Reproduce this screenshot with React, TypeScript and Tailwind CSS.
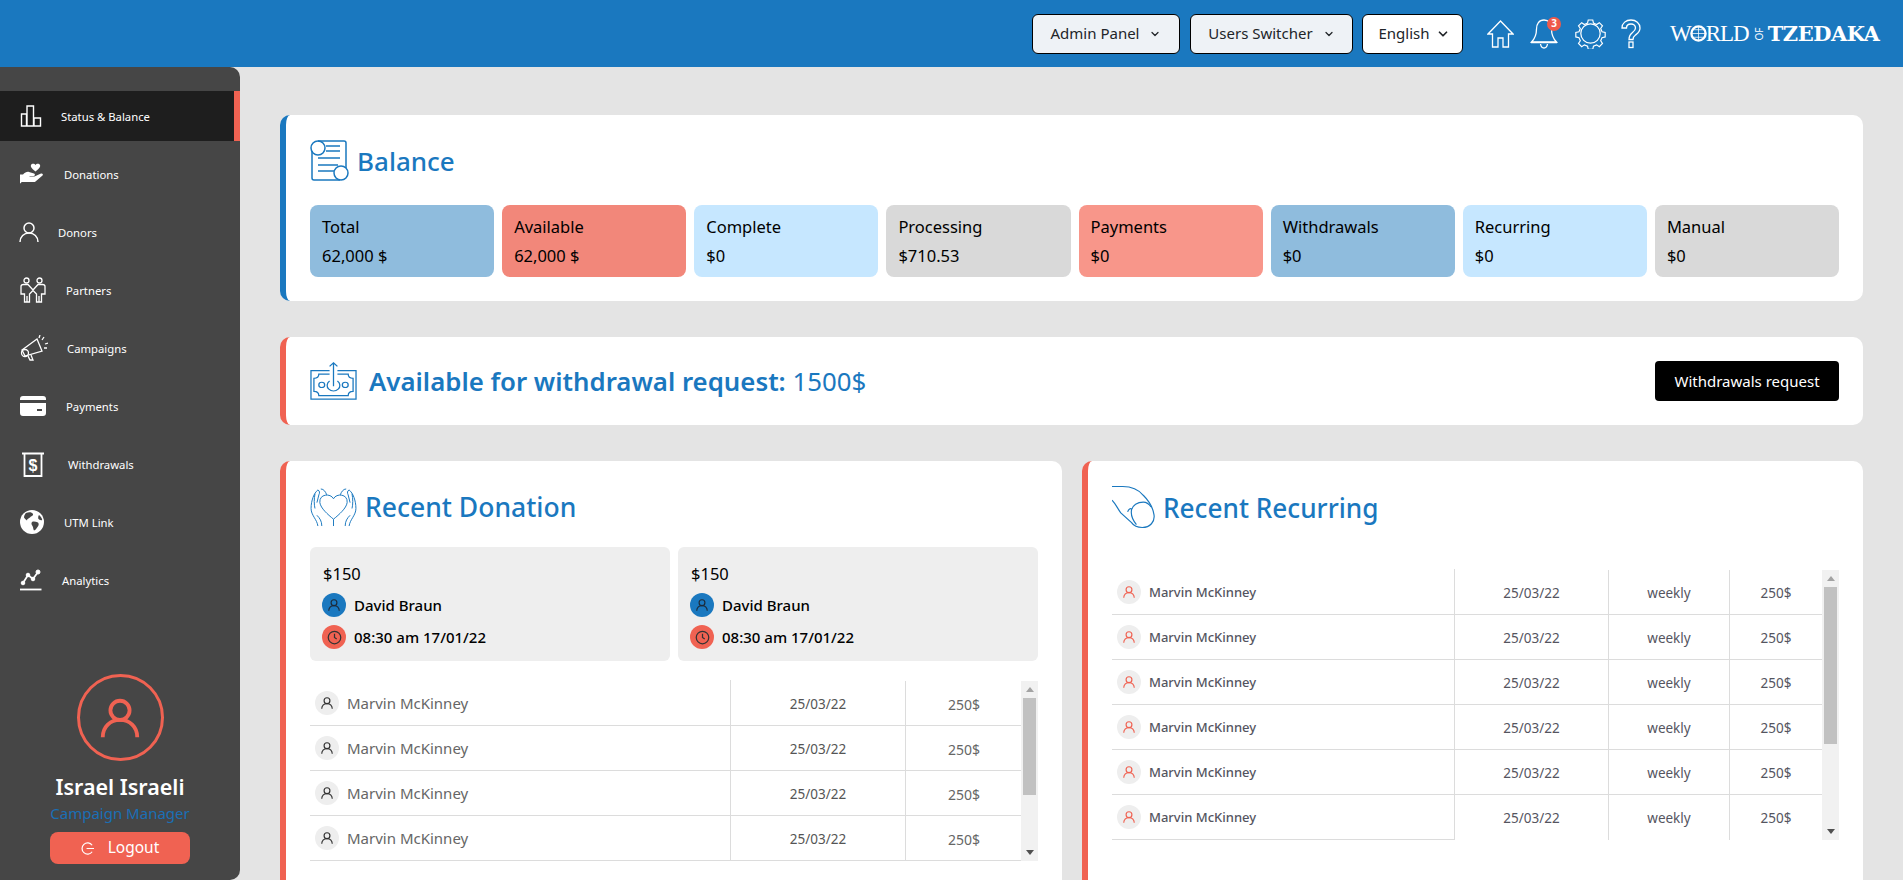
import { ChevronDown } from "lucide-react"

const font = { fontFamily: '"Noto Sans", sans-serif' }

const tiles = [
  { label: "Total", value: "62,000 $", color: "bg-[#8fbcdd]" },
  { label: "Available", value: "62,000 $", color: "bg-[#f2877a]" },
  { label: "Complete", value: "$0", color: "bg-[#c6e7ff]" },
  { label: "Processing", value: "$710.53", color: "bg-[#d9d9d9]" },
  { label: "Payments", value: "$0", color: "bg-[#f8968a]" },
  { label: "Withdrawals", value: "$0", color: "bg-[#8fbcdd]" },
  { label: "Recurring", value: "$0", color: "bg-[#c6e7ff]" },
  { label: "Manual", value: "$0", color: "bg-[#d9d9d9]" },
]

function UserGlyph({ className = "", stroke = "currentColor", width = 2 }: { className?: string; stroke?: string; width?: number }) {
  return (
    <svg viewBox="0 0 24 24" fill="none" stroke={stroke} strokeWidth={width} className={className}>
      <circle cx="12" cy="8" r="5" />
      <path d="M3 22c0-5.500 4-9 9-9s9 3.500 9 9" />
    </svg>
  )
}

function ClockGlyph({ className = "" }: { className?: string }) {
  return (
    <svg viewBox="0 0 24 24" fill="none" stroke="currentColor" strokeWidth="2" className={className}>
      <circle cx="12" cy="12" r="10" />
      <path d="M12 6v6l3.500 2.500" />
    </svg>
  )
}

const navIcons: Record<string, React.ReactNode> = {
  bars: (
    <svg viewBox="0 0 22 22" fill="none" stroke="white" strokeWidth="1.400" className="w-[22px] h-[22px]">
      <path d="M1 21h20M1.500 9h5v12h-5zM7 1h6.500v20H7zM14 13h6.500v8H14z" />
    </svg>
  ),
  donations: (
    <svg viewBox="0 0 24 22" fill="white" className="w-[24px] h-[22px]">
      <path d="M15.500 8.500 C11 5 10.500 3.500 11 2 C11.500 .500 14.500 0 15.500 2 C16.500 0 19.500 .500 20 2 C20.500 3.500 20 5 15.500 8.500Z" />
      <path d="M0 11.500h3c2 -2 4 -3 6 -2.500l5 1.500c1.500.500 1 2.500 -.500 2.500h-4v.500h5l6.500 -3c1.500 -.500 2.500 1 1.500 2l-7 6c-.500 .400 -1 .500 -1.500 .500H1.500C.500 21 0 20.500 0 19.500Z" />
    </svg>
  ),
  donors: <UserGlyph stroke="white" width={1.500} className="w-[24px] h-[24px] ml-[-3px] shrink-0" />,
  partners: (
    <svg viewBox="0 0 26 26" fill="none" stroke="white" strokeWidth="1.300" className="w-[26px] h-[26px]">
      <circle cx="6.500" cy="3.500" r="2.500" />
      <circle cx="19.500" cy="3.500" r="2.500" />
      <path d="M1 17V9.500C1 8 2 7.500 3.500 7.500H8L13 13l5-5.500h4.500C24 7.500 25 8 25 9.500V17l-3.500 0V25h-5v-8L13 13.500 9.500 17v8h-5v-8z" />
      <path d="M7 25v-6M19 25v-6" />
    </svg>
  ),
  campaigns: (
    <svg viewBox="0 0 28 26" fill="none" stroke="white" strokeWidth="1.300" className="w-[28px] h-[26px] shrink-0">
      <path d="M2 15 L17 4 L22 16 L5 21 Z" />
      <circle cx="5" cy="18" r="3.500" />
      <path d="M8 21l2 4h3l-2-5M22 5l2-3M25 9l3-1M24 13h3M19 3l1-3" />
    </svg>
  ),
  payments: (
    <svg viewBox="0 0 26 20" fill="white" className="w-[26px] h-[20px]">
      <path d="M0 3a3 3 0 0 1 3-3h20a3 3 0 0 1 3 3v1H0z" />
      <path fillRule="evenodd" d="M0 7h26v10a3 3 0 0 1-3 3H3a3 3 0 0 1-3-3zM17 13v2h5v-2z" />
    </svg>
  ),
  withdrawals: (
    <svg viewBox="0 0 24 25" fill="none" stroke="white" strokeWidth="1.800" className="w-[24px] h-[25px] ml-[1px] shrink-0">
      <path d="M1 1.500h22M3.500 1.500V24h17V1.500" />
      <text x="12" y="18.500" fill="white" stroke="none" fontSize="16" fontWeight="700" textAnchor="middle" fontFamily="Liberation Sans">$</text>
    </svg>
  ),
  utm: (
    <svg viewBox="0 0 24 24" className="w-[24px] h-[24px]">
      <circle cx="12" cy="12" r="12" fill="white" />
      <path fill="#464646" d="M6 3c3-1.500 6-1 7 1 .500 2-2 2-3 3.500-1 1-3 1-3 3-1.500-1-2.500-2-3-3 0-2 1-3.500 2-4.500zM12 12c2-1 4 0 6 .500 1 1 1 3-.500 4.500-1 1.500-2 3-3.500 3.500-1 -1 -.500-3-1.500-4.500-1-1-1.500-3-.500-4zM19 5c1.500 1 3 3 3.200 5-1.500.500-3 0-4-1.500 0-1.500 0-2.500.800-3.500z" />
    </svg>
  ),
  analytics: (
    <svg viewBox="0 0 22 22" fill="none" stroke="white" className="w-[22px] h-[22px]">
      <path d="M0 20.500h21.500" strokeWidth="1.800" />
      <path d="M3 14 L8 6 L13 10 L18 3" strokeWidth="1.800" />
      <circle cx="3" cy="14" r="1.800" fill="white" />
      <circle cx="8" cy="6" r="1.800" fill="white" />
      <circle cx="13" cy="10" r="1.800" fill="white" />
      <circle cx="18" cy="3" r="2" fill="white" />
    </svg>
  ),
}

const navItems = [
  { label: "Status & Balance", icon: "bars", gap: "ml-[15px]", active: true },
  { label: "Donations", icon: "donations", gap: "ml-[18px]" },
  { label: "Donors", icon: "donors", gap: "ml-[12px]" },
  { label: "Partners", icon: "partners", gap: "ml-[20px]" },
  { label: "Campaigns", icon: "campaigns", gap: "ml-[21px]" },
  { label: "Payments", icon: "payments", gap: "ml-[20px]" },
  { label: "Withdrawals", icon: "withdrawals", gap: "ml-[22px]" },
  { label: "UTM Link", icon: "utm", gap: "ml-[18px]" },
  { label: "Analytics", icon: "analytics", gap: "ml-[16px]" },
]

function TopBar() {
  return (
    <header className="h-[67px] shrink-0 bg-[#1a78bf] flex items-center justify-end pr-[18px]">
      <button className="w-[148px] h-[40px] mr-[10px] rounded-[6px] border border-black bg-[#eef2f6] flex items-center justify-center gap-[10px] text-[15px] text-[#212529]">
        Admin Panel <ChevronDown className="w-[12px] h-[12px]" strokeWidth={2.500} />
      </button>
      <button className="w-[163px] h-[40px] mr-[9px] rounded-[6px] border border-black bg-[#eef2f6] flex items-center justify-center gap-[10px] text-[15px] text-[#212529]">
        Users Switcher <ChevronDown className="w-[12px] h-[12px]" strokeWidth={2.500} />
      </button>
      <button className="w-[101px] h-[40px] mr-[24px] rounded-[6px] border border-black bg-white flex items-center justify-center gap-[6px] pl-[3px] text-[15px] text-[#212529]">
        English <ChevronDown className="w-[14px] h-[14px]" strokeWidth={3} />
      </button>
      <svg viewBox="0 0 27 28" fill="none" stroke="white" strokeWidth="1.300" className="w-[27px] h-[28px] mr-[16px]">
        <path d="M13.500 1 L1 14h4.500v13h5.500v-9h5v9h5.500V14H26Z" />
      </svg>
      <div className="relative w-[31px] h-[32px] mr-[14px]">
        <svg viewBox="0 0 28 31" fill="none" stroke="white" strokeWidth="1.300" className="w-[28px] h-[31px]">
          <path d="M14 2c-5 0-7.500 4-7.500 9 0 7-2 10-5 13h25c-3-3-5-6-5-13 0-5-2.500-9-7.500-9z" />
          <path d="M1 24.500h26M10.500 26c.500 3 1.500 4 3.500 4s3-1 3.500-4" />
        </svg>
        <span className="absolute top-[-1px] right-[0px] w-[14px] h-[14px] rounded-full bg-[#ee5a4b] text-white text-[10px] font-bold flex items-center justify-center">3</span>
      </div>
      <svg viewBox="0 0 32 32" fill="none" stroke="white" strokeWidth="1.300" className="w-[31px] h-[31px] mr-[15px]">
        <circle cx="16" cy="16" r="10" />
        <path d="M13.500 1.500h5l.800 3.500 3.500 1.500 3-2 3.500 3.500-2 3 1.500 3.500 3.500.800v5l-3.500.800-1.500 3.500 2 3-3.500 3.500-3-2-3.500 1.500-.800 3.500h-5l-.800-3.500-3.500-1.500-3 2-3.500-3.500 2-3-1.500-3.500-3.500-.800v-5l3.500-.800 1.500-3.500-2-3 3.500-3.500 3 2 3.500-1.500z" transform="translate(16 16) scale(.93) translate(-16 -16.500)" />
      </svg>
      <svg viewBox="0 0 20 30" fill="none" stroke="white" strokeWidth="1.300" className="w-[20px] h-[30px] mr-[29px]">
        <path d="M1 9C1 4 5 1 10 1s9 3.500 9 8c0 4-2.500 5.500-4.500 7-2 1.500-2.500 2.500-2.500 4.500H8c0-3.500 1-5 3.500-7 1.500-1.200 3-2.500 3-4.500 0-2.500-2-4-4.500-4S5.500 6.500 5.500 9z" />
        <rect x="8" y="23" width="4" height="5.500" />
      </svg>
      <div className="w-[215px] flex items-center text-white whitespace-nowrap leading-none" style={{ fontFamily: '"Liberation Serif", serif' }}>
        <span className="text-[23px] tracking-[-1px]">W</span>
        <svg viewBox="0 0 18 18" fill="none" stroke="white" className="w-[17px] h-[17px] mx-[-1px]">
          <circle cx="9" cy="9" r="7.500" strokeWidth="2.500" />
          <path d="M1.500 9h15M9 1.500v15M3 5h12M3 13h12" strokeWidth=".800" />
        </svg>
        <span className="text-[23px] tracking-[-1px]">RLD</span>
        <span className="mx-[3px] text-[10px] leading-[10px] rotate-[-90deg]" style={font}>OF</span>
        <span className="text-[21px] font-bold tracking-[-0.5px]" style={{ fontFamily: '"DejaVu Serif", serif' }}>TZEDAKA</span>
      </div>
    </header>
  )
}

function Sidebar() {
  return (
    <aside className="w-[240px] shrink-0 bg-[#464646] rounded-r-[10px] flex flex-col h-[813px]">
      <nav className="pt-[24px]">
        {navItems.map((item) => (
          <div
            key={item.label}
            className={`flex items-center pl-[20px] h-[50px] mb-[8px] text-[11.300px] ${
              item.active ? "bg-[#1e1e1e] border-r-[6px] border-[#f06252] text-white" : "text-white"
            }`}
          >
            <span className="w-[26px] flex justify-start">{navIcons[item.icon]}</span>
            <span className={`pt-[2px] ${item.gap}`}>{item.label}</span>
          </div>
        ))}
      </nav>
      <div className="mt-auto flex flex-col items-center pb-[16px]">
        <div className="w-[87px] h-[87px] rounded-full border-[3px] border-[#f06252] flex items-center justify-center">
          <UserGlyph stroke="#f06252" width={2} className="w-[46px] h-[46px]" />
        </div>
        <div className="mt-[10px] text-[21.500px] leading-[31px] font-semibold text-white">Israel Israeli</div>
        <div className="text-[15px] leading-[23px] text-[#1a6fb5]">Campaign Manager</div>
        <button className="mt-[7px] w-[140px] h-[32px] rounded-[8px] bg-[#f06252] text-white text-[15.500px] flex items-center justify-center gap-[14px]">
          <svg viewBox="0 0 14 14" fill="none" stroke="white" strokeWidth="1.300" className="w-[13px] h-[13px]">
            <path d="M12 3.500A6 6 0 1 0 12 10.500M6 7h8" />
          </svg>
          Logout
        </button>
      </div>
    </aside>
  )
}

function Scrollbar({ thumb }: { thumb: string }) {
  return (
    <div className="w-[17px] shrink-0 bg-[#f1f1f1] flex flex-col items-center relative">
      <span className="mt-[6px] w-0 h-0 border-x-[4px] border-x-transparent border-b-[5px] border-b-[#a3a3a3]" />
      <span className={`mt-[6px] w-[13px] bg-[#c1c1c1] ${thumb}`} />
      <span className="mt-auto mb-[6px] w-0 h-0 border-x-[4px] border-x-transparent border-t-[5px] border-t-[#505050]" />
    </div>
  )
}

function DonationRow() {
  return (
    <div className="grid grid-cols-[421px_175px_116px] h-[45px] text-[#666]">
      <div className="border-r border-b border-[#dcdcdc] flex items-center pl-[5px] gap-[8px] mt-[-1px] text-[15px]">
        <span className="w-[24px] h-[24px] rounded-full bg-[#eeeeee] flex items-center justify-center text-[#333]">
          <UserGlyph className="w-[14px] h-[14px]" />
        </span>
        <span className="pt-[1px]">Marvin McKinney</span>
      </div>
      <div className="border-r border-b border-[#dcdcdc] flex items-center justify-center pt-[2px] text-[13.500px] text-[#555]">25/03/22</div>
      <div className="border-b border-[#dcdcdc] flex items-center justify-center pt-[2px] text-[14px]">250$</div>
    </div>
  )
}

function RecurringRow({ last }: { last: boolean }) {
  return (
    <div className="grid grid-cols-[343px_154px_121px_92px] h-[45px] text-[13.500px] text-[#55555f]">
      <div className="border-r border-b border-[#dcdcdc] flex items-center pl-[5px] gap-[8px] mt-[-1px] text-[13px] font-medium">
        <span className="w-[24px] h-[24px] rounded-full bg-[#eeeeee] flex items-center justify-center text-[#f06252]">
          <UserGlyph className="w-[14px] h-[14px]" />
        </span>
        <span className="pt-[3px]">Marvin McKinney</span>
      </div>
      <div className={`border-r border-[#dcdcdc] flex items-center justify-center pt-[2px] ${last ? "" : "border-b"}`}>25/03/22</div>
      <div className={`border-r border-[#dcdcdc] flex items-center justify-center pt-[2px] ${last ? "" : "border-b"}`}>weekly</div>
      <div className={`border-[#dcdcdc] flex items-center justify-center pt-[2px] ${last ? "" : "border-b"}`}>250$</div>
    </div>
  )
}

function DonationTile() {
  return (
    <div className="rounded-[6px] bg-[#eeeeee] pl-[12px] pt-[15px] h-[114px] text-black">
      <div className="text-[16.500px] leading-[24px] pl-[1px]">$150</div>
      <div className="flex items-center gap-[8px] mt-[7px] text-[15px] font-medium">
        <span className="w-[24px] h-[24px] rounded-full bg-[#1a78bf] flex items-center justify-center text-[#1d2b3a]">
          <UserGlyph className="w-[14px] h-[14px]" />
        </span>
        David Braun
      </div>
      <div className="flex items-center gap-[8px] mt-[8px] text-[15px] font-medium">
        <span className="w-[24px] h-[24px] rounded-full bg-[#f06252] flex items-center justify-center text-[#333]">
          <ClockGlyph className="w-[15px] h-[15px]" />
        </span>
        08:30 am 17/01/22
      </div>
    </div>
  )
}

export default function App() {
  return (
    <div className="h-screen overflow-hidden bg-[#e4e4e4] flex flex-col" style={font}>
      <TopBar />
      <div className="flex flex-1 min-h-0">
        <Sidebar />
        <main className="flex-1 min-w-0 pl-[40px] pr-[40px] pt-[48px]">
          <section className="h-[186px] bg-white rounded-[10px] border-l-[6px] border-[#1a78bf] pl-[24px] pr-[24px] pt-[24px]">
            <div className="flex items-center h-[42px] gap-[7px]">
              <svg viewBox="0 0 40 42" fill="none" stroke="#1a78bf" strokeWidth="1.500" className="w-[40px] h-[42px]">
                <path d="M8 2h26c1 0 2 1 2 2v25M2 12v27c0 1 1 2 2 2h26" />
                <circle cx="8" cy="9" r="7" />
                <circle cx="31" cy="34" r="7" />
                <path d="M16 7h14M16 12h14M8 19h22M8 26h20M8 32h16" />
              </svg>
              <h2 className="pt-[2px] text-[26px] font-medium text-[#1a78bf]">Balance</h2>
            </div>
            <div className="grid grid-cols-8 gap-[8px] mt-[24px]">
              {tiles.map((t) => (
                <div key={t.label} className={`h-[72px] rounded-[8px] pl-[12px] pt-[8px] text-black text-[16.500px] leading-[28px] ${t.color}`}>
                  <div>{t.label}</div>
                  <div className="leading-[30px]">{t.value}</div>
                </div>
              ))}
            </div>
          </section>

          <section className="mt-[36px] h-[88px] bg-white rounded-[10px] border-l-[6px] border-[#f06252] pl-[24px] pr-[24px] flex items-center">
            <svg viewBox="0 0 48 44" preserveAspectRatio="none" fill="none" stroke="#1a78bf" strokeWidth="1.300" className="w-[47px] h-[38px] mr-[12px]">
              <path d="M20 10H1v33h46V10H28" />
              <path d="M20 14H9c0 3-2 5-5 5v15c3 0 5 2 5 5h30c0-3 2-5 5-5V19c-3 0-5-2-5-5H28" />
              <circle cx="12" cy="26.500" r="3" />
              <circle cx="36" cy="26.500" r="3" />
              <path d="M20 22a6.500 6.500 0 1 0 8 0M24 28V1M20 5l4-4 4 4" />
            </svg>
            <div className="text-[25.800px] text-[#1a78bf]">
              <span className="font-semibold">Available for withdrawal request:</span> <span className="font-normal">1500$</span>
            </div>
            <button className="ml-auto w-[184px] h-[40px] rounded-[4px] bg-black text-white text-[15px]">Withdrawals request</button>
          </section>

          <div className="mt-[36px] grid grid-cols-[782px_781px] gap-[20px]">
            <section className="h-[500px] bg-white rounded-[10px] border-l-[6px] border-[#f06252] pl-[24px] pr-[24px] pt-[26px]">
              <div className="flex items-center h-[40px] gap-[8px]">
                <svg viewBox="0 0 48 40" fill="none" stroke="#1a78bf" strokeWidth="1" className="w-[47px] h-[39px]">
                  <path d="M24 11c3-6 15-5 14 4-1 6-8 12-14 17-6-5-13-11-14-17-1-9 11-10 14-4z" />
                  <path d="M8 39c-1-7-7-11-7-18C1 13 4 5 8 2c2 1 2 3 1 5l-2 8M12 39c0-5-2-8-5-11M11 1c3 0 5 3 6 6M5 6c-1 5-1 11 0 15" />
                  <path d="M40 39c1-7 7-11 7-18 0-8-3-16-7-19-2 1-2 3-1 5l2 8M36 39c0-5 2-8 5-11M37 1c-3 0-5 3-6 6M43 6c1 5 1 11 0 15" />
                  <path d="M24 32v7" />
                </svg>
                <h2 className="text-[26.500px] font-medium text-[#1a78bf] leading-[40px]">Recent Donation</h2>
              </div>
              <div className="grid grid-cols-2 gap-[8px] mt-[20px] w-[728px]">
                <DonationTile />
                <DonationTile />
              </div>
              <div className="mt-[20px] flex h-[180px] w-[728px]">
                <div className="w-[711px]">
                  {[0, 1, 2, 3].map((i) => (
                    <DonationRow key={i} />
                  ))}
                </div>
                <Scrollbar thumb="h-[97px]" />
              </div>
            </section>

            <section className="h-[500px] bg-white rounded-[10px] border-l-[6px] border-[#f06252] pl-[24px] pr-[24px] pt-[24px]">
              <div className="flex items-center h-[45px] gap-[8px]">
                <svg viewBox="0 0 44 45" fill="none" stroke="#1a78bf" strokeWidth="1.200" className="w-[43px] h-[45px]">
                  <path d="M0 1h11c8 0 16 3 21 9 5 5 10 13 11 20 1 7-4 13-12 13-6 0-9-2-11-5L9 28c-3-4-5-9-9-13" />
                  <path d="M20 25c1-5 6-8 12-8 3 0 6 2 8 5M20 25c-1 5 1 10 5 15M20 24c-1-1-3 0-4 3" />
                </svg>
                <h2 className="text-[26.200px] font-medium text-[#1a78bf] leading-[40px]">Recent Recurring</h2>
              </div>
              <div className="mt-[40px] flex h-[270px] w-[727px]">
                <div className="w-[710px]">
                  {[0, 1, 2, 3, 4, 5].map((i) => (
                    <RecurringRow key={i} last={i === 5} />
                  ))}
                </div>
                <Scrollbar thumb="h-[157px]" />
              </div>
            </section>
          </div>
        </main>
      </div>
    </div>
  )
}
